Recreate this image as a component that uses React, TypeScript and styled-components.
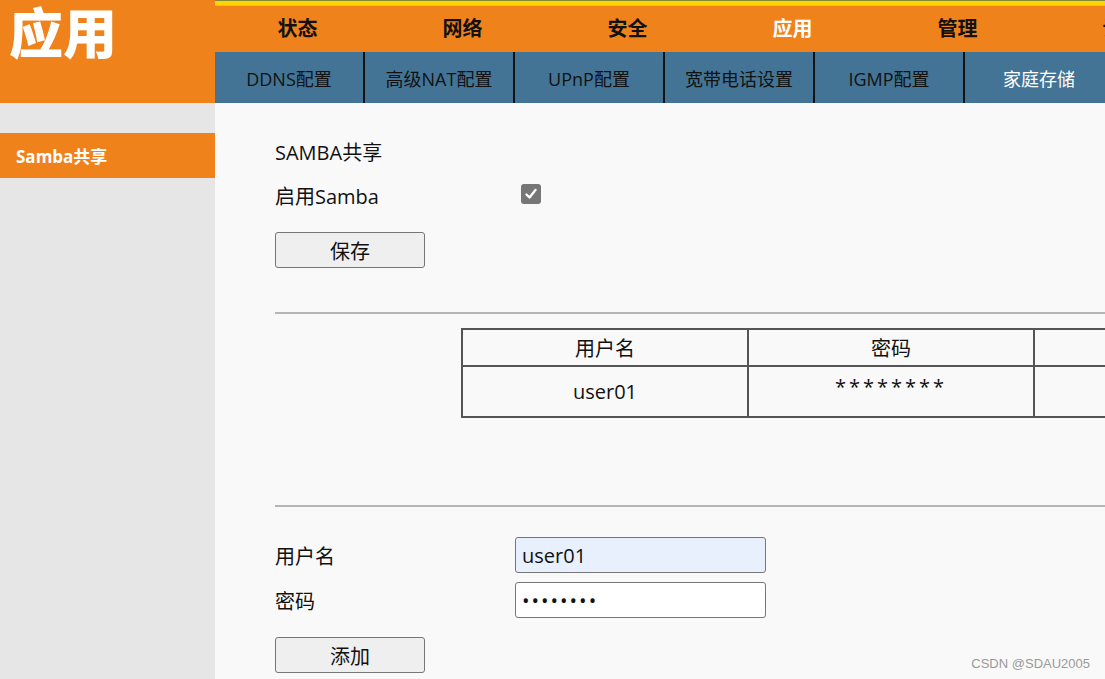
import React from "react";
import styled, { createGlobalStyle } from "styled-components";

const FONT = `"Open Sans", "Noto Sans CJK SC", "Noto Sans", sans-serif`;

const Global = createGlobalStyle`
  html, body { margin: 0; padding: 0; overflow: hidden; background: #f9f9f9; }
  body { font-family: ${FONT}; width: 1105px; height: 679px; }
`;

const ORANGE = "#f0821c";
const BLUE = "#437495";

const Page = styled.div`
  display: grid;
  grid-template-columns: 215px 1fr;
  grid-template-rows: 103px 576px;
  width: 1105px;
  height: 679px;
  overflow: hidden;
  position: relative;
`;

const Brand = styled.div`
  background: ${ORANGE};
  color: #fff;
  font-family: "Noto Sans CJK SC", sans-serif;
  font-weight: 900;
  font-size: 54px;
  line-height: 62px;
  padding-left: 9px;
`;

const Header = styled.div`
  display: flex;
  flex-direction: column;
  overflow: hidden;
  min-width: 0;
`;

const TopStrip = styled.div`
  height: 6px;
  background: linear-gradient(#7f8c3a 0, #7f8c3a 1px, #ffd400 1px, #ffd400 5px, #f7a50e 6px);
`;

const MainNav = styled.div`
  display: flex;
  height: 46px;
  background: ${ORANGE};
`;

const MainItem = styled.div<{ $active?: boolean }>`
  flex: 0 0 165px;
  display: flex;
  align-items: center;
  justify-content: center;
  font-family: "Noto Sans CJK SC", sans-serif;
  font-weight: 700;
  font-size: 20px;
  color: ${(p) => (p.$active ? "#fff" : "#111")};
  padding-bottom: 3px;
`;

const SubNav = styled.div`
  display: flex;
  height: 51px;
  background: ${BLUE};
`;

const SubItem = styled.div<{ $active?: boolean }>`
  flex: 0 0 148px;
  border-right: 2px solid #111;
  display: flex;
  align-items: center;
  justify-content: center;
  font-size: 18px;
  color: ${(p) => (p.$active ? "#fff" : "#111")};
  &:last-child { border-right: none; }
`;

const Sidebar = styled.div`
  background: #e6e6e6;
  padding-top: 30px;
`;

const SideItem = styled.div`
  height: 45px;
  background: ${ORANGE};
  color: #fff;
  font-weight: 700;
  font-size: 17px;
  display: flex;
  align-items: center;
  padding-left: 16px;
`;

const Main = styled.div`
  background: #f9f9f9;
  padding: 35px 0 0 60px;
  min-width: 0;
  overflow: hidden;
  color: #111;
  font-size: 20px;
`;

const Title = styled.div`
  height: 30px;
  line-height: 30px;
`;

const FormRow = styled.div<{ $mt: number }>`
  display: flex;
  align-items: center;
  height: 36px;
  margin-top: ${(p) => p.$mt}px;
`;

const Label = styled.div<{ $w: number }>`
  width: ${(p) => p.$w}px;
  flex: none;
`;

const Check = styled.span`
  width: 20px;
  height: 20px;
  border-radius: 3px;
  background: #767676;
  display: inline-flex;
  align-items: center;
  justify-content: center;
  margin-top: -2px;
`;

const Button = styled.button<{ $mt: number }>`
  display: block;
  width: 150px;
  height: 36px;
  margin-top: ${(p) => p.$mt}px;
  background: #efefef;
  border: 1px solid #767676;
  border-radius: 3px;
  font-family: ${FONT};
  font-size: 20px;
  color: #111;
  padding: 0;
`;

const Rule = styled.div<{ $mt: number }>`
  height: 0;
  border-top: 2px solid #b5b5b5;
  margin-top: ${(p) => p.$mt}px;
  width: 900px;
`;

const Table = styled.table`
  margin: 14px 0 0 186px;
  border-collapse: collapse;
  border: 2px solid #555;
  width: 860px;
  table-layout: fixed;
`;

const Th = styled.th`
  border: 2px solid #555;
  height: 35px;
  font-weight: 400;
  font-size: 20px;
  text-align: center;
  padding: 0;
`;

const Td = styled.td<{ $small?: boolean }>`
  border: 2px solid #555;
  height: 43px;
  text-align: center;
  padding: 0;
  font-size: 20px;
  vertical-align: ${(p) => (p.$small ? "top" : "middle")};
  padding-top: ${(p) => (p.$small ? "6px" : "0")};
  letter-spacing: ${(p) => (p.$small ? "3px" : "0")};
`;

const Input = styled.input<{ $auto?: boolean }>`
  width: 251px;
  height: 36px;
  box-sizing: border-box;
  border: 1px solid #767676;
  border-radius: 3px;
  background: ${(p) => (p.$auto ? "#e8f0fe" : "#fff")};
  font-family: ${FONT};
  font-size: 20px;
  color: #111;
  padding: 0 6px;
  outline: none;
  letter-spacing: ${(p) => (p.$auto ? "0" : "2px")};
`;

const Watermark = styled.div`
  position: absolute;
  right: 15px;
  bottom: 8px;
  font-family: "Liberation Sans", Arial, sans-serif;
  font-size: 13px;
  color: #9a9a9a;
`;

const mainItems = ["状态", "网络", "安全", "应用", "管理", "诊断"];
const subItems = ["DDNS配置", "高级NAT配置", "UPnP配置", "宽带电话设置", "IGMP配置", "家庭存储"];

export default function App() {
  return (
    <>
      <Global />
      <Page>
        <Brand>应用</Brand>
        <Header>
          <TopStrip />
          <MainNav>
            {mainItems.map((m) => (
              <MainItem key={m} $active={m === "应用"}>{m}</MainItem>
            ))}
          </MainNav>
          <SubNav>
            {subItems.map((s) => (
              <SubItem key={s} $active={s === "家庭存储"}>{s}</SubItem>
            ))}
          </SubNav>
        </Header>
        <Sidebar>
          <SideItem>Samba共享</SideItem>
        </Sidebar>
        <Main>
          <Title>SAMBA共享</Title>
          <FormRow $mt={9}>
            <Label $w={246}>启用Samba</Label>
            <Check>
              <svg width="14" height="14" viewBox="0 0 14 14">
                <path d="M2.5 7.5 L5.5 10.5 L11.5 3" stroke="#fff" strokeWidth="2.4" fill="none" strokeLinecap="round" strokeLinejoin="round" />
              </svg>
            </Check>
          </FormRow>
          <Button $mt={19}>保存</Button>
          <Rule $mt={44} />
          <Table>
            <thead>
              <tr>
                <Th>用户名</Th>
                <Th>密码</Th>
                <Th></Th>
              </tr>
            </thead>
            <tbody>
              <tr>
                <Td>user01</Td>
                <Td $small>********</Td>
                <Td></Td>
              </tr>
            </tbody>
          </Table>
          <Rule $mt={87} />
          <FormRow $mt={30}>
            <Label $w={240}>用户名</Label>
            <Input $auto readOnly value="user01" />
          </FormRow>
          <FormRow $mt={9}>
            <Label $w={240}>密码</Label>
            <Input type="password" readOnly value="12345678" />
          </FormRow>
          <Button $mt={19}>添加</Button>
        </Main>
        <Watermark>CSDN @SDAU2005</Watermark>
      </Page>
    </>
  );
}
